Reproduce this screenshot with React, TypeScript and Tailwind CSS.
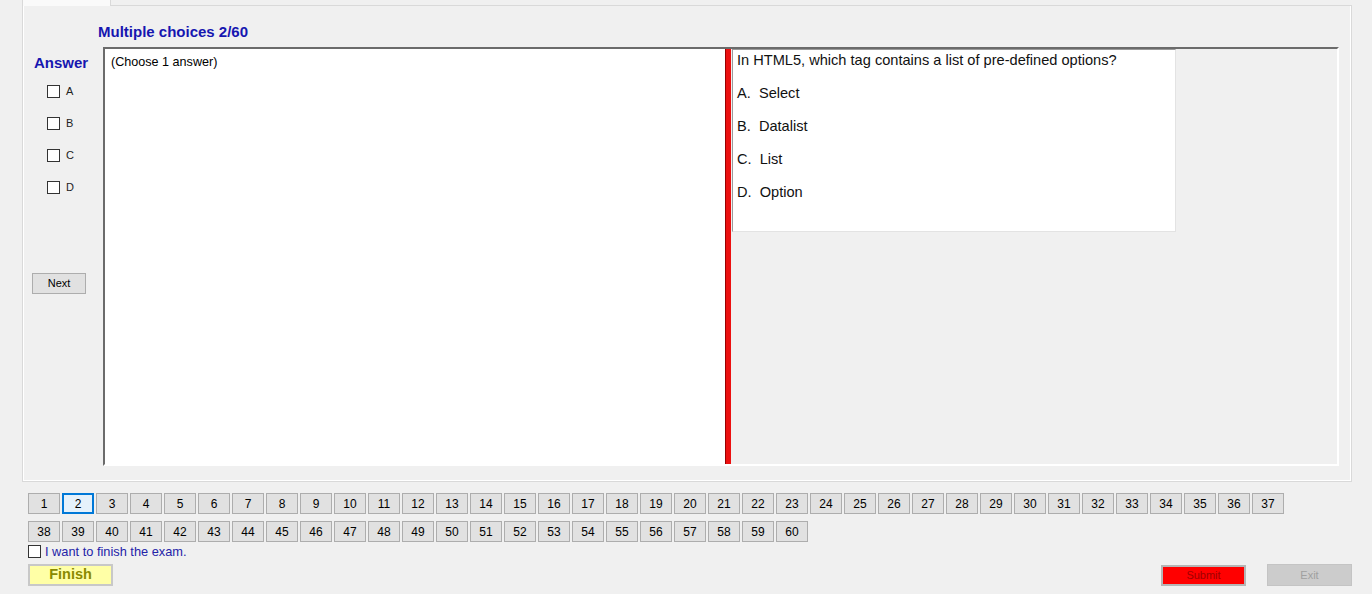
import React from "react";

const Box = () => (
  <div className="w-[13px] h-[13px] border border-[#333333] bg-white shrink-0" />
);

export default function App() {
  const nums = Array.from({ length: 60 }, (_, i) => i + 1);
  return (
    <div className="w-[1372px] h-[594px] bg-[#f0f0f0] overflow-hidden font-['Liberation_Sans',Arial,sans-serif] text-black">
      {/* Tab control */}
      <div className="pl-[22px] w-[1352px]">
        <div className="flex h-[6px]">
          <div className="w-[89px] h-[6px] bg-[#fafafa] border-l border-r border-[#d9d9d9]" />
          <div className="flex-1 h-[6px] border-b border-[#d9d9d9]" />
        </div>
        <div className="h-[476px] border-l border-r border-b border-[#d9d9d9] bg-[#f0f0f0] shadow-[inset_1px_0_0_#ffffff,inset_-1px_-1px_0_#ffffff] flex flex-col">
          <div className="pl-[75px] pt-[18px] h-[41px] text-[15px] leading-[16px] font-bold text-[#1616b0]">
            Multiple choices 2/60
          </div>
          <div className="flex">
            {/* left column */}
            <div className="w-[80px] flex flex-col">
              <div className="pl-[11px] mt-[8px] text-[15px] leading-[16px] font-bold text-[#1616b0]">
                Answer
              </div>
              <div className="mt-[14px] pl-[24px] flex flex-col gap-[19px]">
                {["A", "B", "C", "D"].map((l) => (
                  <div key={l} className="flex items-center h-[13px]">
                    <Box />
                    <span className="ml-[6px] text-[11px] leading-[13px] text-[#222]">{l}</span>
                  </div>
                ))}
              </div>
              <div className="mt-[79px] ml-[9px] w-[54px] h-[21px] bg-[#e1e1e1] border border-[#adadad] flex items-center justify-center text-[11px] text-black">
                Next
              </div>
            </div>
            {/* split container */}
            <div className="w-[1236px] h-[419px] border-2 border-t-[#6b6b6b] border-l-[#6b6b6b] border-b-[#ffffff] border-r-[#ffffff] flex">
              <div className="w-[620px] h-full bg-white pl-[6px] pt-[6px] text-[12.6px] leading-[14px]">
                (Choose 1 answer)
              </div>
              <div className="w-[6px] h-full bg-[#ec1010] border-l border-[#9a0000]" />
              <div className="flex-1 h-full bg-[#f0f0f0] pl-[1px]">
                <div className="w-[444px] h-[183px] bg-white border border-t-[#9a9a9a] border-l-[#9a9a9a] border-r-[#e3e3e3] border-b-[#e3e3e3] pl-[4px] pt-[2px] text-[14.6px] leading-[16px] text-[#111]">
                  <div>In HTML5, which tag contains a list of pre-defined options?</div>
                  <div className="mt-[17px] whitespace-pre">A.  Select</div>
                  <div className="mt-[17px] whitespace-pre">B.  Datalist</div>
                  <div className="mt-[17px] whitespace-pre">C.  List</div>
                  <div className="mt-[17px] whitespace-pre">D.  Option</div>
                </div>
              </div>
            </div>
          </div>
        </div>
      </div>

      {/* bottom area */}
      <div className="pl-[28px] pt-[11px]">
        <div className="w-[1256px] flex flex-wrap gap-x-[2px] gap-y-[7px]">
          {nums.map((n) =>
            n === 2 ? (
              <div
                key={n}
                className="w-[32px] h-[21px] bg-[#e5f1fb] border-2 border-[#0078d7] flex items-center justify-center text-[12px] text-black"
              >
                {n}
              </div>
            ) : (
              <div
                key={n}
                className="w-[32px] h-[21px] bg-[#e1e1e1] border border-[#adadad] flex items-center justify-center text-[12px] text-black"
              >
                {n}
              </div>
            )
          )}
        </div>
        <div className="mt-[3px] flex items-center h-[13px]">
          <Box />
          <span className="ml-[4px] text-[12.8px] leading-[14px] text-[#2323a8]">I want to finish the exam.</span>
        </div>
        <div className="mt-[6px] flex items-start pr-[20px]">
          <div className="w-[85px] h-[22px] bg-[#ffffa6] border-2 border-[#c8c8c8] flex items-center justify-center text-[14.5px] font-bold text-[#8a8a00]">
            Finish
          </div>
          <div className="flex-1" />
          <div className="mt-[1px] w-[85px] h-[21px] bg-[#ff0000] border-2 border-[#b5b5b5] flex items-center justify-center text-[11px] text-[#a00000]">
            Submit
          </div>
          <div className="ml-[21px] w-[85px] h-[22px] bg-[#cccccc] border border-[#c4c4c4] flex items-center justify-center text-[11px] text-[#a0a0a0]">
            Exit
          </div>
        </div>
      </div>
    </div>
  );
}
